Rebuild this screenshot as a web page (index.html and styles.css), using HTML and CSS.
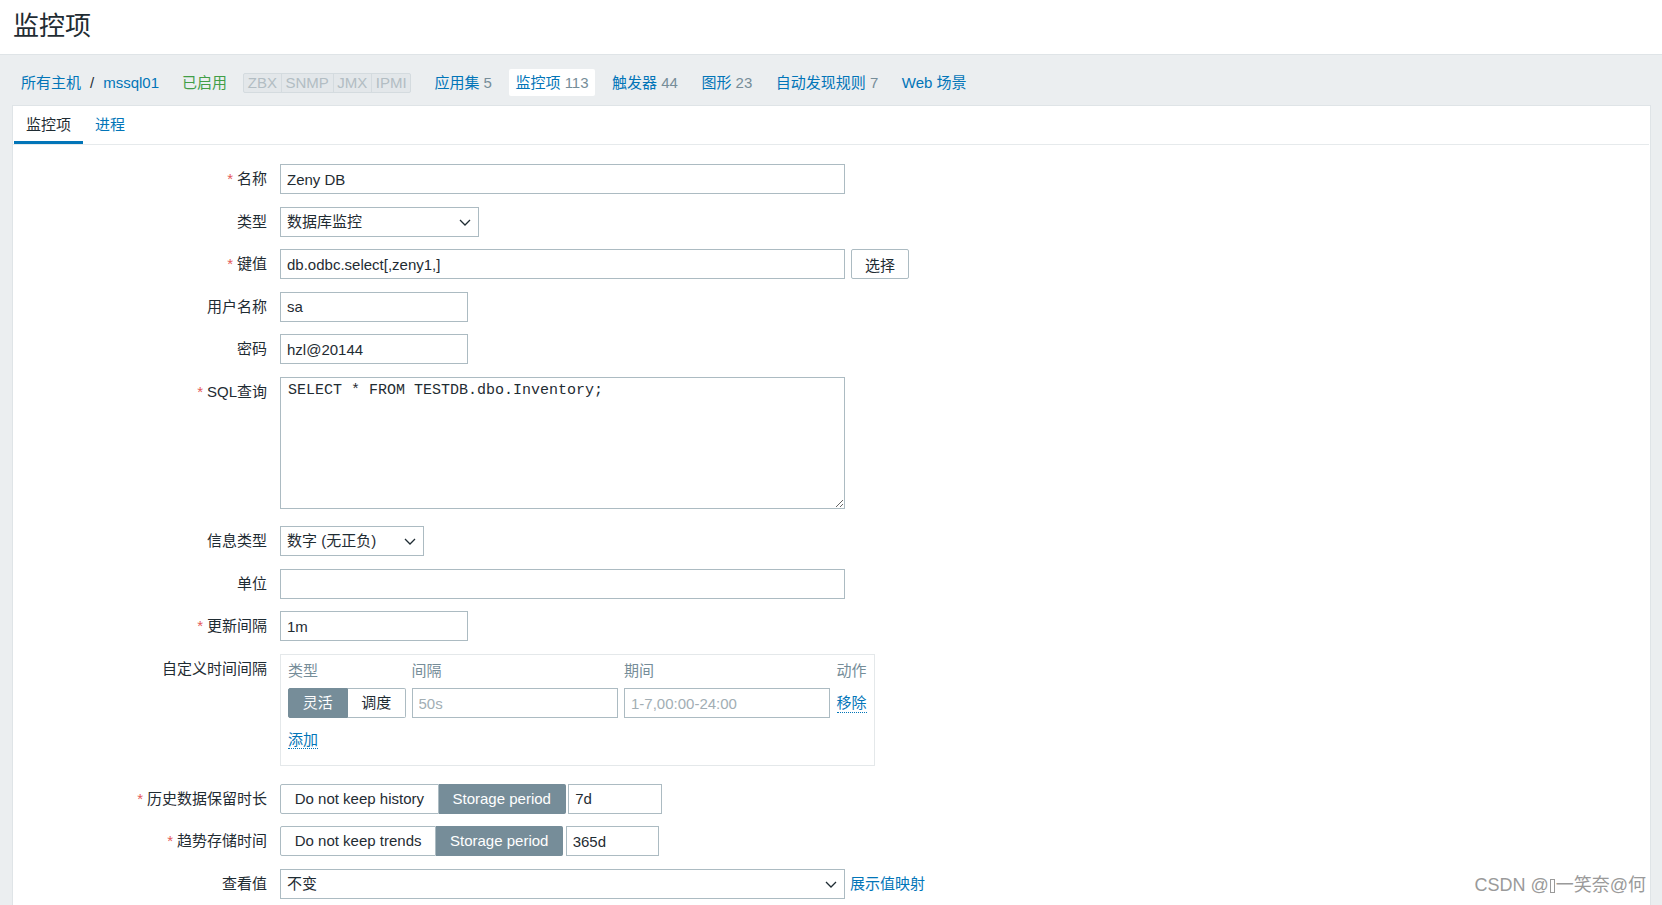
FILE: index.html
```html
<!DOCTYPE html>
<html lang="zh-CN">
<head>
<meta charset="utf-8">
<title>监控项</title>
<link rel="stylesheet" href="styles.css">
</head>
<body>
<header class="page-header"><h1 class="page-title">监控项</h1></header>

<nav class="host-nav">
  <div class="crumbs"><a class="link">所有主机</a><span class="crumb-sep">/</span><a class="link">mssql01</a></div>
  <span class="status-on">已启用</span>
  <span class="status-box"><span class="status-seg">ZBX</span><span class="status-seg">SNMP</span><span class="status-seg">JMX</span><span class="status-seg">IPMI</span></span>
  <a class="nav-item first">应用集 <span class="count">5</span></a>
  <a class="nav-item active">监控项 <span class="count">113</span></a>
  <a class="nav-item">触发器 <span class="count">44</span></a>
  <a class="nav-item">图形 <span class="count">23</span></a>
  <a class="nav-item">自动发现规则 <span class="count">7</span></a>
  <a class="nav-item">Web 场景</a>
</nav>

<section class="panel">
  <div class="tabs">
    <a class="tab active">监控项</a>
    <a class="tab">进程</a>
  </div>

  <form class="form">
    <div class="row">
      <label class="lbl req">名称</label>
      <div class="field"><input class="input w-xl" type="text" value="Zeny DB"></div>
    </div>
    <div class="row">
      <label class="lbl">类型</label>
      <div class="field">
        <div class="select w-type"><span>数据库监控</span><svg class="chev" width="12" height="7" viewBox="0 0 12 7"><path d="M1 1l5 5 5-5" fill="none" stroke="#1f2c33" stroke-width="1.3"/></svg></div>
      </div>
    </div>
    <div class="row">
      <label class="lbl req">键值</label>
      <div class="field"><input class="input w-xl" type="text" value="db.odbc.select[,zeny1,]"><button class="btn" type="button">选择</button></div>
    </div>
    <div class="row">
      <label class="lbl">用户名称</label>
      <div class="field"><input class="input w-sm" type="text" value="sa"></div>
    </div>
    <div class="row">
      <label class="lbl">密码</label>
      <div class="field"><input class="input w-sm" type="text" value="hzl@20144"></div>
    </div>
    <div class="row">
      <label class="lbl req">SQL查询</label>
      <div class="field"><textarea class="textarea w-xl">SELECT * FROM TESTDB.dbo.Inventory;</textarea></div>
    </div>
    <div class="row">
      <label class="lbl">信息类型</label>
      <div class="field">
        <div class="select w-info"><span>数字 (无正负)</span><svg class="chev" width="12" height="7" viewBox="0 0 12 7"><path d="M1 1l5 5 5-5" fill="none" stroke="#1f2c33" stroke-width="1.3"/></svg></div>
      </div>
    </div>
    <div class="row">
      <label class="lbl">单位</label>
      <div class="field"><input class="input w-xl" type="text" value=""></div>
    </div>
    <div class="row">
      <label class="lbl req">更新间隔</label>
      <div class="field"><input class="input w-sm" type="text" value="1m"></div>
    </div>
    <div class="row row-tall">
      <label class="lbl">自定义时间间隔</label>
      <div class="field">
        <div class="intervals">
          <span class="th">类型</span><span class="th">间隔</span><span class="th">期间</span><span class="th">动作</span>
          <div class="seg"><span class="seg-btn on">灵活</span><span class="seg-btn">调度</span></div>
          <input class="input" type="text" placeholder="50s">
          <input class="input" type="text" placeholder="1-7,00:00-24:00">
          <a class="action-link">移除</a>
          <div class="add-cell"><a class="action-link">添加</a></div>
        </div>
      </div>
    </div>
    <div class="row row-storage">
      <label class="lbl req">历史数据保留时长</label>
      <div class="field">
        <div class="seg"><span class="seg-btn">Do not keep history</span><span class="seg-btn on">Storage period</span></div>
        <input class="input w-xs" type="text" value="7d">
      </div>
    </div>
    <div class="row row-storage">
      <label class="lbl req">趋势存储时间</label>
      <div class="field">
        <div class="seg"><span class="seg-btn">Do not keep trends</span><span class="seg-btn on">Storage period</span></div>
        <input class="input w-xs" type="text" value="365d">
      </div>
    </div>
    <div class="row">
      <label class="lbl">查看值</label>
      <div class="field">
        <div class="select w-xl"><span>不变</span><svg class="chev" width="12" height="7" viewBox="0 0 12 7"><path d="M1 1l5 5 5-5" fill="none" stroke="#1f2c33" stroke-width="1.3"/></svg></div>
        <a class="link map-link">展示值映射</a>
      </div>
    </div>
  </form>
</section>

<div class="watermark">CSDN @<span class="missing-glyph"></span>一笑奈@何</div>
</body>
</html>
```

FILE: styles.css
```css
* { box-sizing: border-box; }

html, body {
  margin: 0;
  padding: 0;
}

body {
  background: #ebeef0;
  color: #1f2c33;
  font-family: "Liberation Sans", Arial, "Noto Sans CJK SC", sans-serif;
  font-size: 15px;
  line-height: 1.2;
  overflow: hidden;
  height: 905px;
}

a { text-decoration: none; cursor: pointer; }

.link { color: #0275b8; }

/* header */
.page-header {
  background: #fff;
  height: 55px;
  border-bottom: 1px solid #dfe4e7;
}
.page-title {
  margin: 0;
  padding-left: 13px;
  font-size: 26px;
  font-weight: normal;
  line-height: 53px;
  color: #1f2c33;
}

/* host navigation */
.host-nav {
  display: flex;
  align-items: center;
  height: 50px;
  padding: 5px 0 0 21px;
  white-space: nowrap;
}
.crumb-sep {
  margin: 0 9px;
  color: #1f2c33;
}
.status-on {
  margin-left: 23px;
  color: #429e47;
}
.status-box {
  display: inline-flex;
  margin-left: 16px;
  border: 1px solid #d4dbdf;
  border-radius: 2px;
  background: #e3e7ea;
  line-height: 18px;
}
.status-seg {
  padding: 0 3.75px;
  color: #b2bdc3;
  border-left: 1px solid #d4dbdf;
}
.status-seg:first-child { border-left: 0; }

.nav-item {
  margin-left: 10.5px;
  padding: 0 6.5px;
  line-height: 27px;
  color: #0275b8;
  border-radius: 2px;
}
.nav-item.first { margin-left: 16.5px; }
.nav-item.active { background: #fff; }
.count { color: #768d99; }

/* panel */
.panel {
  margin: 0 11px 0 12px;
  background: #fff;
  border: 1px solid #dfe4e7;
  border-bottom: 0;
  height: 800px;
}
.tabs {
  display: flex;
  margin: 0 1px 0 0;
  padding-left: 1px;
  border-bottom: 1px solid #e6eaec;
}
.tab {
  padding: 2px 12px 0;
  line-height: 33px;
  color: #0275b8;
  border-bottom: 3px solid transparent;
}
.tab.active {
  color: #1f2c33;
  border-bottom-color: #0275b8;
}

/* form */
.form {
  padding-top: 19px;
}
.row {
  display: grid;
  grid-template-columns: 254px 1fr;
  column-gap: 13px;
  margin-bottom: 12.5px;
}
.row-tall { margin-bottom: 18px; }
.row-storage { margin-bottom: 12.5px; }
.lbl {
  text-align: right;
  line-height: 30px;
  white-space: nowrap;
  color: #1f2c33;
}
.req::before {
  content: "*";
  color: #e45959;
  margin-right: 4px;
}
.field {
  display: flex;
  align-items: flex-start;
}

.input {
  height: 30px;
  border: 1px solid #acbbc2;
  background: #fff;
  color: #1f2c33;
  font-family: "Liberation Sans", Arial, "Noto Sans CJK SC", sans-serif;
  font-size: 15px;
  padding: 0 6px;
  outline: none;
  border-radius: 0;
  margin: 0;
}
.input::placeholder { color: #a2aeb4; }

.w-xl { width: 565px; }
.w-sm { width: 188px; }
.w-xs { width: 93.5px; margin-left: 2.5px; }
.w-type { width: 199px; }
.w-info { width: 143.5px; }

.select {
  display: flex;
  align-items: center;
  justify-content: space-between;
  height: 30px;
  border: 1px solid #acbbc2;
  padding: 0 7px 0 6px;
  background: #fff;
  white-space: nowrap;
}
.chev { flex: none; margin-top: 1px; }

.btn {
  height: 30px;
  margin-left: 6px;
  padding: 0 13px;
  border: 1px solid #acbbc2;
  border-radius: 2px;
  background: #fff;
  color: #1f2c33;
  font-family: "Liberation Sans", Arial, "Noto Sans CJK SC", sans-serif;
  font-size: 15px;
}

.textarea {
  display: block;
  height: 132px;
  margin-bottom: 5px;
  border: 1px solid #acbbc2;
  padding: 4px 7px;
  font-family: "Liberation Mono", "Courier New", monospace;
  font-size: 15px;
  line-height: 18px;
  color: #1f2c33;
  outline: none;
  resize: both;
}

.map-link { margin-left: 5px; line-height: 30px; }

/* custom intervals */
.intervals {
  width: 595px;
  border: 1px solid #e4e8ea;
  padding: 5px 7px 10px 7px;
  display: grid;
  grid-template-columns: 117px 206px 206px auto;
  grid-template-rows: 22px 30px 30px;
  column-gap: 6.5px;
  row-gap: 6.5px;
  align-items: center;
}
.th { color: #768d99; line-height: 22px; }
.intervals .input { width: 206px; }
.add-cell { grid-column: 1 / -1; line-height: 30px; }
.action-link {
  color: #0275b8;
  border-bottom: 1px dotted #0275b8;
  justify-self: start;
}

/* segmented buttons */
.seg {
  display: inline-flex;
  height: 30px;
  flex: none;
}
.seg-btn {
  padding: 0 13.75px;
  line-height: 28px;
  border: 1px solid #acbbc2;
  border-left-width: 0;
  background: #fff;
  color: #1f2c33;
  white-space: nowrap;
}
.seg-btn:first-child { border-left-width: 1px; border-radius: 2px 0 0 2px; }
.seg-btn:last-child { border-radius: 0 2px 2px 0; }
.seg-btn.on {
  background: #768d99;
  border-color: #768d99;
  color: #fff;
}

/* watermark */
.watermark {
  position: absolute;
  right: 16px;
  bottom: 8px;
  font-size: 18px;
  color: #9a9a9a;
  text-shadow: 0 0 2px #fff, 0 0 2px #fff;
  white-space: nowrap;
  display: flex;
  align-items: center;
}
.missing-glyph {
  display: inline-block;
  width: 5px;
  height: 14px;
  border: 1px solid #9a9a9a;
  margin: 0 1px;
}
```
